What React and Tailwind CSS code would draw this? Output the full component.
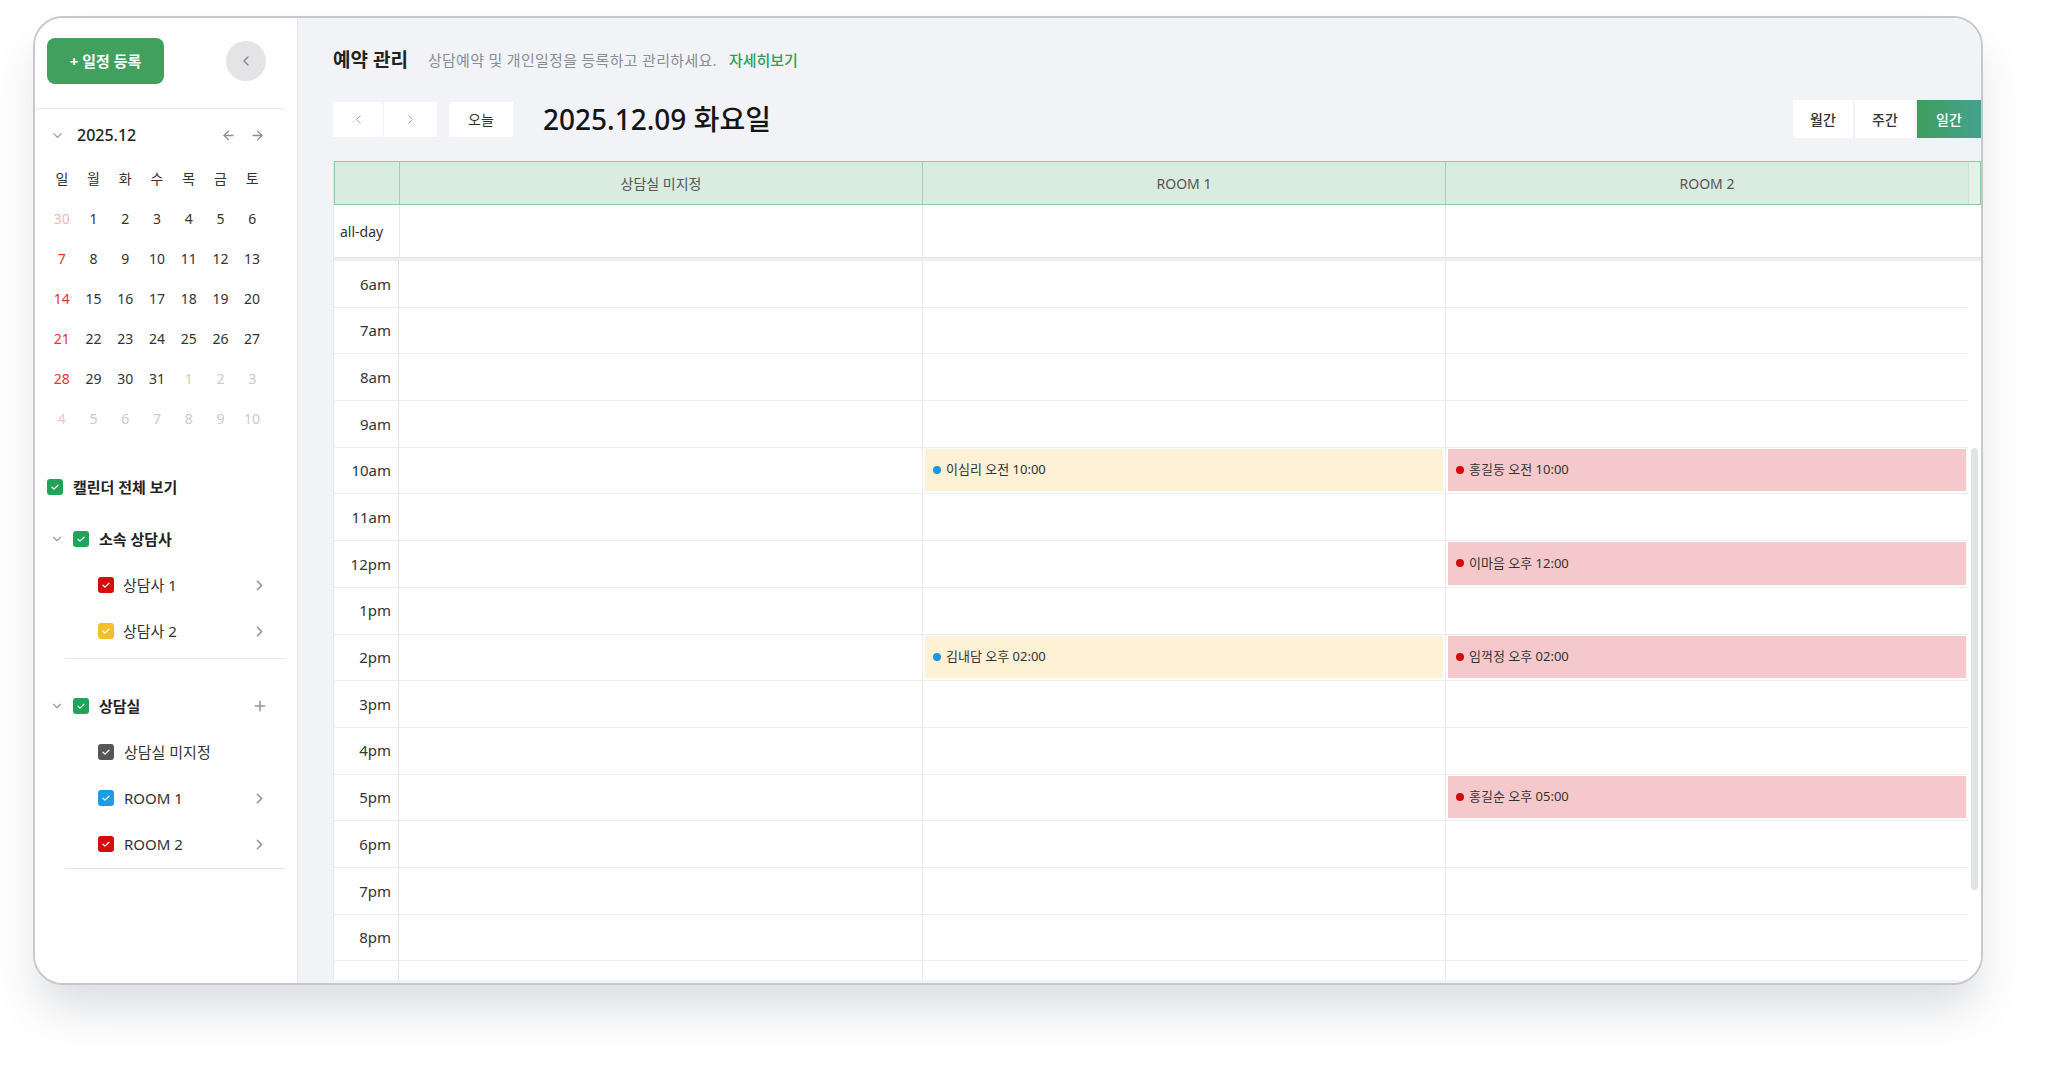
import { ChevronDown, ChevronRight, ChevronLeft, ArrowLeft, ArrowRight, Plus } from "lucide-react";

const hours = ["6am", "7am", "8am", "9am", "10am", "11am", "12pm", "1pm", "2pm", "3pm", "4pm", "5pm", "6pm", "7pm", "8pm", "9pm"];

// 이벤트: [시간, 컬럼, 이름]
const events = {
    "10am": { 1: "이심리 오전 10:00", 2: "홍길동 오전 10:00" },
    "12pm": { 2: "이마음 오후 12:00" },
    "2pm": { 1: "김내담 오후 02:00", 2: "임꺽정 오후 02:00" },
    "5pm": { 2: "홍길순 오후 05:00" },
};

const weeks = [
    [["30", "prev"], "1", "2", "3", "4", "5", "6"],
    ["7", "8", "9", "10", "11", "12", "13"],
    ["14", "15", "16", "17", "18", "19", "20"],
    ["21", "22", "23", "24", "25", "26", "27"],
    ["28", "29", "30", "31", ["1", "next"], ["2", "next"], ["3", "next"]],
    [["4", "next"], ["5", "next"], ["6", "next"], ["7", "next"], ["8", "next"], ["9", "next"], ["10", "next"]],
];

function Check({ color }) {
    return (
        <span className={`w-4 h-4 shrink-0 rounded-[3px] flex items-center justify-center ${color}`}>
            <svg viewBox="0 0 16 16" className="w-3 h-3">
                <path d="M4 8.3l2.6 2.6L12 5.6" fill="none" stroke="white" strokeWidth="1.6" strokeLinecap="round" strokeLinejoin="round" />
            </svg>
        </span>
    );
}

function DayCell({ d, col }) {
    const [label, kind] = Array.isArray(d) ? d : [d, "cur"];
    let color = "text-[#333]";
    if (kind === "cur" && col === 0) color = "text-[#e8352f]";
    if (kind === "prev") color = "text-[#f5b5c0]";
    if (kind === "next") color = col === 0 ? "text-[#f3c3cb]" : "text-[#c9cacd]";
    return <div className={`h-10 flex items-center justify-center text-[14px] ${color}`}>{label}</div>;
}

function Sidebar() {
    return (
        <aside className="w-[263px] shrink-0 bg-white border-r border-[#e4e6ea] flex flex-col">
            {/* 상단 버튼 */}
            <div className="pt-[20px] pl-[12px] pr-[31px] flex items-center justify-between">
                <button className="w-[117px] h-[46px] rounded-[8px] bg-[#42a05f] text-white text-[15px] font-bold">
                    + 일정 등록
                </button>
                <button className="w-10 h-10 rounded-full bg-[#e4e4e6] flex items-center justify-center text-[#8a8a8e]">
                    <ChevronLeft size={16} strokeWidth={2.2} />
                </button>
            </div>
            <div className="mt-[24px] ml-[1px] mr-[13px] h-px bg-[#e6e8eb]" />

            {/* 미니 달력 */}
            <div className="mt-[14px] h-[24px] flex items-center pl-[15px] pr-[32px]">
                <ChevronDown size={15} className="text-[#999ca3]" strokeWidth={2} />
                <span className="ml-[12px] text-[16px] font-medium text-[#222]">2025.12</span>
                <div className="ml-auto flex items-center gap-[14px] text-[#8b8f99]">
                    <ArrowLeft size={15} strokeWidth={2.2} />
                    <ArrowRight size={15} strokeWidth={2.2} />
                </div>
            </div>
            <div className="mt-[11px] ml-[11px] w-[222px] grid grid-cols-7">
                {["일", "월", "화", "수", "목", "금", "토"].map((w) => (
                    <div key={w} className="h-10 flex items-center justify-center text-[14px] text-[#333]">
                        {w}
                    </div>
                ))}
                {weeks.map((wk, i) => wk.map((d, j) => <DayCell key={`${i}-${j}`} d={d} col={j} />))}
            </div>

            {/* 캘린더 필터 */}
            <div className="mt-[26px] h-[46px] flex items-center pl-[12px] gap-[10px]">
                <Check color="bg-[#22a35a]" />
                <span className="text-[15px] font-bold text-[#222]">캘린더 전체 보기</span>
            </div>

            <div className="mt-[6px] h-[46px] flex items-center pl-[15px]">
                <ChevronDown size={14} className="text-[#999ca3]" strokeWidth={2} />
                <span className="ml-[9px]"><Check color="bg-[#22a35a]" /></span>
                <span className="ml-[10px] text-[15px] font-bold text-[#222]">소속 상담사</span>
            </div>
            {[
                ["상담사 1", "bg-[#d60d0d]"],
                ["상담사 2", "bg-[#f5bf2b]"],
            ].map(([name, c]) => (
                <div key={name} className="h-[46px] flex items-center pl-[63px] pr-[29px]">
                    <Check color={c} />
                    <span className="ml-[9px] text-[15px] text-[#333]">{name}</span>
                    <ChevronRight size={17} className="ml-auto text-[#8f9299]" strokeWidth={2.2} />
                </div>
            ))}
            <div className="mt-[4px] ml-[30px] mr-[12px] h-px bg-[#e3e5e8]" />

            <div className="mt-[24px] h-[46px] flex items-center pl-[15px] pr-[29px]">
                <ChevronDown size={14} className="text-[#999ca3]" strokeWidth={2} />
                <span className="ml-[9px]"><Check color="bg-[#22a35a]" /></span>
                <span className="ml-[10px] text-[15px] font-bold text-[#222]">상담실</span>
                <Plus size={16} className="ml-auto text-[#8f9299]" strokeWidth={2.2} />
            </div>
            {[
                ["상담실 미지정", "bg-[#565656]", false],
                ["ROOM 1", "bg-[#1e9be3]", true],
                ["ROOM 2", "bg-[#d60d0d]", true],
            ].map(([name, c, arrow]) => (
                <div key={name} className="h-[46px] flex items-center pl-[63px] pr-[29px]">
                    <Check color={c} />
                    <span className="ml-[10px] text-[15px] text-[#333]">{name}</span>
                    {arrow && <ChevronRight size={17} className="ml-auto text-[#8f9299]" strokeWidth={2.2} />}
                </div>
            ))}
            <div className="mt-[1px] ml-[30px] mr-[12px] h-px bg-[#e3e5e8]" />
        </aside>
    );
}

function EventBox({ text, room }) {
    const yellow = room === 1;
    return (
        <div className={`h-full flex items-center gap-[5px] pl-[8px] ${yellow ? "bg-[#fdf1d6]" : "bg-[#f5c9cb]"}`}>
            <span className={`w-[8px] h-[8px] rounded-full ${yellow ? "bg-[#1e96e0]" : "bg-[#d20a0a]"}`} />
            <span className="text-[13px] text-[#333]">{text}</span>
        </div>
    );
}

function Grid() {
    return (
        <div className="flex-1 min-h-0 flex flex-col overflow-hidden bg-white border-l border-[#e3e5e8]">
            {/* 헤더 */}
            <div className="h-[44px] shrink-0 flex bg-[#d9ecdf] border border-[#8fcb9d]">
                <div className="w-[64px] shrink-0" />
                {["상담실 미지정", "ROOM 1", "ROOM 2"].map((r) => (
                    <div key={r} className="w-[523px] shrink-0 border-l border-[#9fd2ab] flex items-center justify-center text-[14px] text-[#555]">
                        {r}
                    </div>
                ))}
                <div className="flex-1 border-l border-[#c7e3cf] bg-[#e3f1e7]" />
            </div>

            {/* all-day */}
            <div className="h-[52px] shrink-0 flex">
                <div className="w-[65px] shrink-0 flex items-center pl-[6px] text-[14px] text-[#333]">all-day</div>
                {[0, 1, 2].map((i) => (
                    <div key={i} className="w-[523px] shrink-0 border-l border-[#e8e9eb]" />
                ))}
                <div className="flex-1" />
            </div>
            <div className="h-[4px] shrink-0 bg-[#eceef1] border-t border-[#e2e4e7]" />

            {/* 시간 그리드 */}
            <div className="flex-1 min-h-0 flex overflow-hidden">
                <div className="w-[1634px] shrink-0">
                    {hours.map((h) => (
                        <div key={h} className="h-[46.7px] flex border-b border-[#ececee]">
                            <div className="w-[65px] shrink-0 border-r border-[#e3e4e6] flex items-center justify-end pr-[7px] text-[15px] text-[#333]">
                                {h}
                            </div>
                            {[0, 1, 2].map((c) => (
                                <div key={c} className={`w-[523px] shrink-0 pt-[1px] pb-[2px] px-[2px] ${c > 0 ? "border-l border-[#ececee]" : ""}`}>
                                    {events[h] && events[h][c] && <EventBox text={events[h][c]} room={c} />}
                                </div>
                            ))}
                        </div>
                    ))}
                </div>
                {/* 스크롤바 */}
                <div className="flex-1 flex justify-center pt-[187px]">
                    <div className="w-[7px] h-[442px] rounded-full bg-[#e2e3e5]" />
                </div>
            </div>
        </div>
    );
}

export default function App() {
    return (
        <div className="w-[2048px] h-[1065px] bg-white overflow-hidden pt-[16px] pl-[33px] font-['Noto_Sans','Noto_Sans_CJK_KR',sans-serif]">
            <div className="w-[1950px] h-[969px] rounded-[30px] border-2 border-[#c6c8cd] overflow-hidden flex bg-white shadow-[0_28px_45px_-6px_rgba(70,80,100,0.2)]">
                <Sidebar />

                <main className="flex-1 min-w-0 bg-[#f1f3f6] flex flex-col pl-[35px] pb-[3px]">
                    {/* 제목 */}
                    <div className="pt-[30px] h-[54px] flex items-end">
                        <div className="h-[24px] flex items-center">
                            <h1 className="text-[19px] font-bold text-[#222]">예약 관리</h1>
                            <span className="ml-[20px] text-[15px] tracking-[0.3px] text-[#8a8d93]">상담예약 및 개인일정을 등록하고 관리하세요.</span>
                            <span className="ml-[12px] text-[15px] font-medium text-[#2ea05a]">자세히보기</span>
                        </div>
                    </div>

                    {/* 네비게이션 */}
                    <div className="mt-[28px] h-[38px] flex items-center">
                        <div className="flex gap-[1px]">
                            <button className="w-[50px] h-[35px] bg-white flex items-center justify-center text-[#a0a3a8]">
                                <ChevronLeft size={15} strokeWidth={1.6} />
                            </button>
                            <button className="w-[53px] h-[35px] bg-white flex items-center justify-center text-[#a0a3a8]">
                                <ChevronRight size={15} strokeWidth={1.6} />
                            </button>
                        </div>
                        <button className="ml-[12px] w-[64px] h-[35px] bg-white text-[14px] text-[#333]">오늘</button>
                        <h2 className="ml-[30px] text-[28px] font-medium text-[#151515] leading-none">2025.12.09 화요일</h2>

                        <div className="ml-auto flex gap-[2px] h-[38px]">
                            <button className="w-[60px] bg-white text-[14px] font-medium text-[#333]">월간</button>
                            <button className="w-[60px] bg-white text-[14px] font-medium text-[#333]">주간</button>
                            <button className="w-[64px] bg-gradient-to-r from-[#3f9d5c] to-[#45a18e] text-[14px] font-medium text-white">일간</button>
                        </div>
                    </div>

                    <div className="mt-[23px] flex-1 min-h-0 flex flex-col">
                        <Grid />
                    </div>
                </main>
            </div>
        </div>
    );
}
